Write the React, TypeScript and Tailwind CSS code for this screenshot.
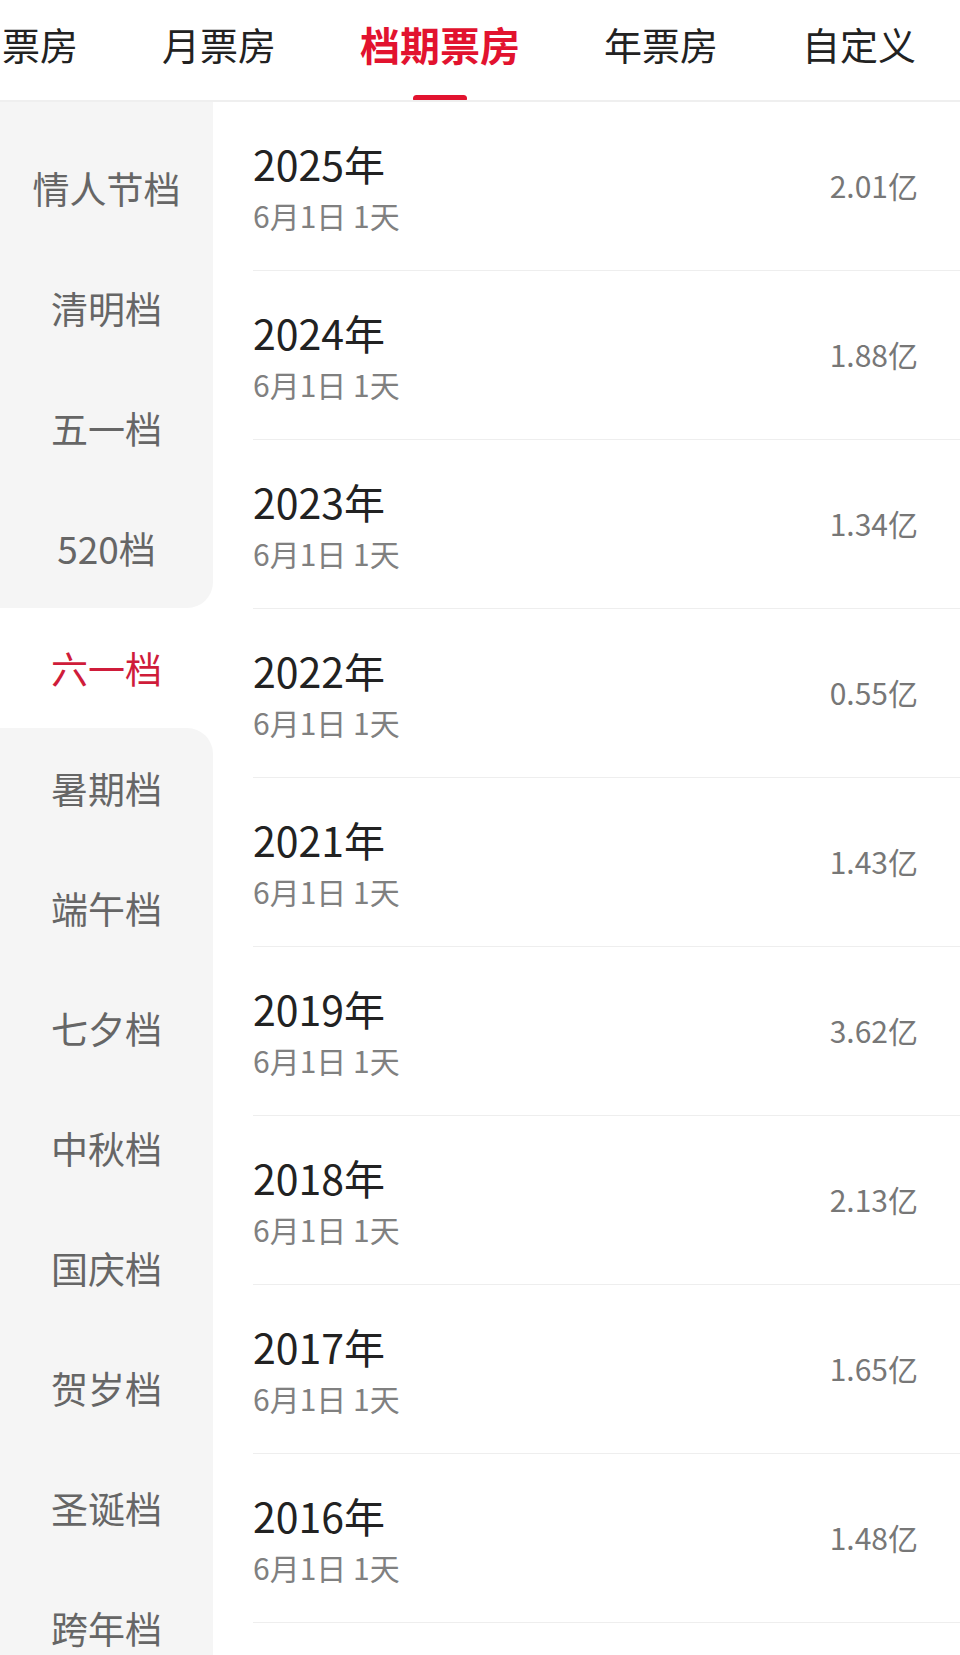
import React from "react";

const tabs = ["日票房", "月票房", "档期票房", "年票房", "自定义"];
const activeTab = "档期票房";

const seasons = [
  "情人节档",
  "清明档",
  "五一档",
  "520档",
  "六一档",
  "暑期档",
  "端午档",
  "七夕档",
  "中秋档",
  "国庆档",
  "贺岁档",
  "圣诞档",
  "跨年档",
];
const activeSeason = 4;

const rows = [
  { year: "2025年", range: "6月1日 1天", box: "2.01亿" },
  { year: "2024年", range: "6月1日 1天", box: "1.88亿" },
  { year: "2023年", range: "6月1日 1天", box: "1.34亿" },
  { year: "2022年", range: "6月1日 1天", box: "0.55亿" },
  { year: "2021年", range: "6月1日 1天", box: "1.43亿" },
  { year: "2019年", range: "6月1日 1天", box: "3.62亿" },
  { year: "2018年", range: "6月1日 1天", box: "2.13亿" },
  { year: "2017年", range: "6月1日 1天", box: "1.65亿" },
  { year: "2016年", range: "6月1日 1天", box: "1.48亿" },
];

function TabBar() {
  return (
    <div className="h-[102px] border-b-2 border-[#efefef] overflow-hidden">
      {/* tab strip is scrolled a bit, first tab partly out of view */}
      <div className="flex h-[100px] -ml-[78px]">
        {tabs.map((t) => {
          const active = t === activeTab;
          return (
            <div key={t} className="relative flex h-full shrink-0 items-center px-[42px] pb-[12px]">
              <span
                className={
                  active
                    ? "text-[40px] leading-[40px] font-bold text-[#e2132f] whitespace-nowrap"
                    : "text-[38px] leading-[38px] text-[#222222] whitespace-nowrap"
                }
              >
                {t}
              </span>
              {active && (
                <div className="absolute -bottom-[2px] left-1/2 -translate-x-1/2 w-[54px] h-[7px] rounded-full bg-[#e2132f]" />
              )}
            </div>
          );
        })}
      </div>
    </div>
  );
}

function Sidebar() {
  return (
    <div className="w-[213px] shrink-0 bg-white">
      <div className="h-[26px] bg-[#f5f5f5]" />
      {seasons.map((s, i) => {
        const active = i === activeSeason;
        let cls = "flex h-[120px] items-center justify-center text-[37px] leading-[37px] ";
        if (active) cls += "bg-white text-[#cf1c3a]";
        else cls += "bg-[#f5f5f5] text-[#666666]";
        if (i === activeSeason - 1) cls += " rounded-br-[26px]";
        if (i === activeSeason + 1) cls += " rounded-tr-[26px]";
        return (
          <div key={s} className={cls}>
            {s}
          </div>
        );
      })}
    </div>
  );
}

function Row({ year, range, box }: { year: string; range: string; box: string }) {
  return (
    <div className="flex h-[169px] items-center justify-between border-b border-[#eeeeee] pr-[42px]">
      <div className="flex flex-col">
        <span className="text-[41px] leading-[48px] text-[#222222]">{year}</span>
        <span className="mt-[10px] text-[30px] leading-[36px] text-[#808080]">{range}</span>
      </div>
      <span className="pb-[3px] text-[30px] leading-[36px] text-[#777777]">{box}</span>
    </div>
  );
}

export default function App() {
  return (
    <div className="h-[1655px] w-[960px] overflow-hidden bg-white font-['Noto_Sans_CJK_SC',sans-serif]">
      <TabBar />
      <div className="flex">
        <Sidebar />
        <div className="flex-1 pl-[40px]">
          {rows.map((r) => (
            <Row key={r.year} {...r} />
          ))}
        </div>
      </div>
    </div>
  );
}
